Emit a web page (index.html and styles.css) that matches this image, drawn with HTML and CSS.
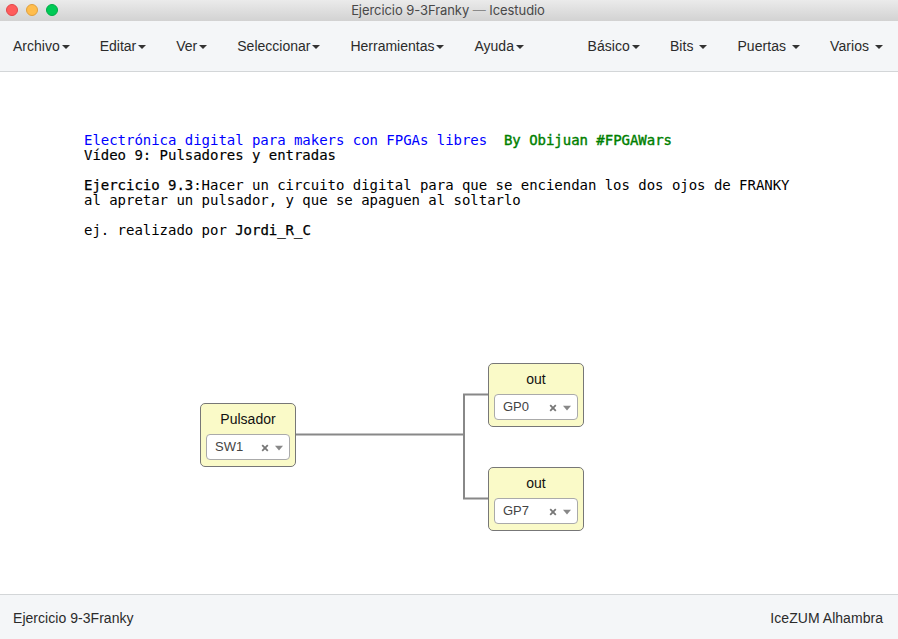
FILE: index.html
```html
<!DOCTYPE html>
<html lang="es">
<head>
<meta charset="utf-8">
<title>Ejercicio 9-3Franky — Icestudio</title>
<link rel="stylesheet" href="styles.css">
</head>
<body>
<header class="titlebar">
  <div class="lights"><i class="light red"></i><i class="light amber"></i><i class="light green"></i></div>
  <span class="window-title">Ejercicio 9-3Franky <span class="dash">—</span> Icestudio</span>
</header>
<nav class="menubar">
  <div class="menu main">
    <a>Archivo<i class="caret"></i></a><a>Editar<i class="caret"></i></a><a>Ver<i class="caret"></i></a><a>Seleccionar<i class="caret"></i></a><a>Herramientas<i class="caret"></i></a><a>Ayuda<i class="caret"></i></a>
  </div>
  <div class="menu blocks">
    <a>Básico<i class="caret"></i></a><a>Bits <i class="caret"></i></a><a>Puertas <i class="caret"></i></a><a>Varios <i class="caret"></i></a>
  </div>
</nav>
<main class="canvas">
<pre class="info"><span class="blue">Electrónica digital para makers con FPGAs libres</span>  <span class="green-text">By Obijuan #FPGAWars</span>
<span class="semi">Vídeo 9: Pulsadores y entradas</span>

<b>Ejercicio 9.3</b>:Hacer un circuito digital para que se enciendan los dos ojos de FRANKY
al apretar un pulsador, y que se apaguen al soltarlo

ej. realizado por <b>Jordi_R_C</b></pre>
  <svg class="wires" width="898" height="523" viewBox="0 0 898 523">
    <path d="M296 362.5H464M488 322.5H464V426.5H488"/>
  </svg>
  <section class="block input">
    <h2>Pulsador</h2>
    <div class="select"><span>SW1</span><svg width="24" height="10" viewBox="0 0 24 10"><path class="cross" d="M1.2 2.2L6.8 7.8M6.8 2.2L1.2 7.8"/><path class="arrow" d="M14 2.8H22L18 7.4Z"/></svg></div>
  </section>
  <section class="block out-a">
    <h2>out</h2>
    <div class="select"><span>GP0</span><svg width="24" height="10" viewBox="0 0 24 10"><path class="cross" d="M1.2 2.2L6.8 7.8M6.8 2.2L1.2 7.8"/><path class="arrow" d="M14 2.8H22L18 7.4Z"/></svg></div>
  </section>
  <section class="block out-b">
    <h2>out</h2>
    <div class="select"><span>GP7</span><svg width="24" height="10" viewBox="0 0 24 10"><path class="cross" d="M1.2 2.2L6.8 7.8M6.8 2.2L1.2 7.8"/><path class="arrow" d="M14 2.8H22L18 7.4Z"/></svg></div>
  </section>
</main>
<footer class="statusbar"><span>Ejercicio 9-3Franky</span><span>IceZUM Alhambra</span></footer>
</body>
</html>
```
FILE: styles.css
```css
* { box-sizing: border-box; }
body {
  margin: 0;
  width: 898px;
  height: 639px;
  display: flex;
  flex-direction: column;
  overflow: hidden;
  background: #fff;
  color: #2b2b2b;
  font: 14px/20px "Liberation Sans", Arial, sans-serif;
}
.titlebar {
  height: 21px;
  display: grid;
  grid-template-columns: 64px 1fr 66px;
  align-items: center;
  background: linear-gradient(#ebebeb, #d2d2d2);
}
.lights { display: flex; gap: 8px; padding-left: 6px; margin-top: -1px; }
.light { width: 12px; height: 12px; border-radius: 50%; border: 1px solid; }
.red { background: #ff5c5c; border-color: #e2474a; }
.amber { background: #ffbd4c; border-color: #e0a03c; }
.green { background: #00ca56; border-color: #00ac47; }
.window-title {
  text-align: center;
  font: 13px/20px Inter, sans-serif;
  letter-spacing: -0.07px;
  margin-top: -2px;
  color: #484848;
}
.dash { color: #8a8a8a; }
.menubar {
  height: 51px;
  display: flex;
  justify-content: space-between;
  align-items: flex-start;
  padding: 15px 15px 0 13px;
  background: #f4f6f8;
  border-bottom: 1px solid #d3d6d8;
}
.menu { display: flex; gap: 30px; white-space: pre; }
.blocks { letter-spacing: 0.06px; }
.menu a { display: flex; align-items: center; }
.caret {
  margin: 2px 0 0 2px;
  border: 4px solid transparent;
  border-top-color: #333;
  border-bottom: 0;
}
.canvas { position: relative; height: 522px; padding: 61px 84px; }
.info {
  margin: 0;
  font: 14px/15px "DejaVu Sans Mono", monospace;
  letter-spacing: -0.03px;
  color: #000;
}
.blue { color: #00f; }
.green-text { color: #008000; -webkit-text-stroke: 0.4px #008000; }
.info b { font-weight: 400; -webkit-text-stroke: 0.25px #000; }
.semi { -webkit-text-stroke: 0.15px #000; }
.wires { position: absolute; left: 0; top: 0; fill: none; stroke: #888; stroke-width: 2; }
.block {
  position: absolute;
  width: 96px;
  height: 64px;
  padding: 5px;
  background: #fafac8;
  border: 1px solid #777;
  border-radius: 5px;
}
.input { left: 200px; top: 331px; }
.out-a { left: 488px; top: 291px; }
.out-b { left: 488px; top: 395px; }
.block h2 { margin: 0 0 5px; font-size: 14px; font-weight: 400; line-height: 20px; text-align: center; color: #111; }
.select {
  height: 26px;
  display: flex;
  align-items: center;
  justify-content: space-between;
  padding: 0 4px 0 8px;
  background: #fff;
  border: 1px solid #aaa;
  border-radius: 4px;
  font-size: 13px;
  line-height: 24px;
  color: #444;
}
.select svg { margin-top: 2px; }
.cross { stroke: #777; stroke-width: 1.8; }
.arrow { fill: #888; }
.statusbar {
  height: 45px;
  display: flex;
  justify-content: space-between;
  padding: 13px 15px 0 13px;
  letter-spacing: 0.04px;
  background: #f4f6f8;
  border-top: 1px solid #d3d6d8;
}
```
